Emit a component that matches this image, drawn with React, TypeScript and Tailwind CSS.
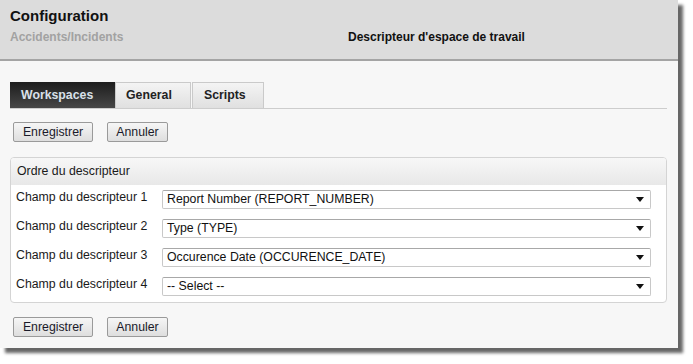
import React from "react";

const font = { fontFamily: '"Liberation Sans", Arial, sans-serif' };

function Btn({ label, w }: { label: string; w: string }) {
  return (
    <button
      className={`h-[20px] ${w} rounded-[2px] border border-[#9a9a9a] bg-gradient-to-b from-[#f6f6f6] to-[#dedede] text-[12.3px] leading-[18px] text-[#1a1a2a]`}
    >
      {label}
    </button>
  );
}

function Row({ label, value }: { label: string; value: string }) {
  return (
    <div className="flex h-[29px] items-start">
      <div className="w-[151px] pl-[5px] pt-[5px] text-[12.3px] leading-[14px] text-[#1a1a1a]">{label}</div>
      <div className="mt-[5px] flex h-[19px] w-[489px] items-center justify-between rounded-[2px] border border-[#c8c8c8] border-t-[#a8a8a8] bg-white pl-[4px] pr-[6px] text-[12.3px] text-[#111]">
        <span>{value}</span>
        <svg width="8" height="5" viewBox="0 0 8 5">
          <polygon points="0,0 8,0 4,5" fill="#111" />
        </svg>
      </div>
    </div>
  );
}

export default function App() {
  return (
    <div className="h-[364px] w-[693px] bg-white" style={font}>
      <div className="h-[348px] w-[678px] bg-[#f7f7f7] shadow-[5px_5px_3px_rgba(0,0,0,0.6)]">
        <div className="h-[61px] border-b-2 border-[#a4a4a4] bg-[#dcdcdc] px-[10px] pt-[7px]">
          <div className="text-[15px] font-bold leading-[18px] text-[#111]">Configuration</div>
          <div className="mt-[5px] flex text-[12px] font-bold leading-[14px]">
            <div className="w-[338px] text-[#a2a2a2]">Accidents/Incidents</div>
            <div className="text-[#111]">Descripteur d'espace de travail</div>
          </div>
        </div>
        <div className="px-[10px] pt-[21px]">
          <div className="flex h-[27px] w-[657px] border-b border-[#cdcdcd]">
            <div className="flex h-[26px] w-[105px] items-center pl-[11px] bg-gradient-to-b from-[#1e1e1e] to-[#474747] text-[12.3px] font-bold text-[#d9e0ea]">
              Workspaces
            </div>
            <div className="flex h-[26px] w-[76px] items-center border border-b-0 border-[#cacaca] pl-[10px] bg-gradient-to-b from-[#f4f4f4] to-[#e0e0e0] text-[12.3px] font-bold text-[#222]">
              General
            </div>
            <div className="ml-[1px] flex h-[26px] w-[72px] items-center border border-b-0 border-[#cacaca] pl-[11px] bg-gradient-to-b from-[#f4f4f4] to-[#e0e0e0] text-[12.3px] font-bold text-[#222]">
              Scripts
            </div>
          </div>
          <div className="mt-[13px] flex gap-[14px] pl-[3px]">
            <Btn label="Enregistrer" w="w-[80px]" />
            <Btn label="Annuler" w="w-[61px]" />
          </div>
          <div className="mt-[15px] w-[657px] overflow-hidden rounded-[4px] border border-[#d4d4d4] bg-white pb-[1px]">
            <div className="flex h-[27px] items-center bg-gradient-to-b from-[#f7f7f7] to-[#e8e8e8] pl-[6px] text-[12.3px] text-[#1a1a1a]">
              Ordre du descripteur
            </div>
            <Row label="Champ du descripteur 1" value="Report Number (REPORT_NUMBER)" />
            <Row label="Champ du descripteur 2" value="Type (TYPE)" />
            <Row label="Champ du descripteur 3" value="Occurence Date (OCCURENCE_DATE)" />
            <Row label="Champ du descripteur 4" value="-- Select --" />
          </div>
          <div className="mt-[14px] flex gap-[14px] pl-[3px]">
            <Btn label="Enregistrer" w="w-[80px]" />
            <Btn label="Annuler" w="w-[61px]" />
          </div>
        </div>
      </div>
    </div>
  );
}
